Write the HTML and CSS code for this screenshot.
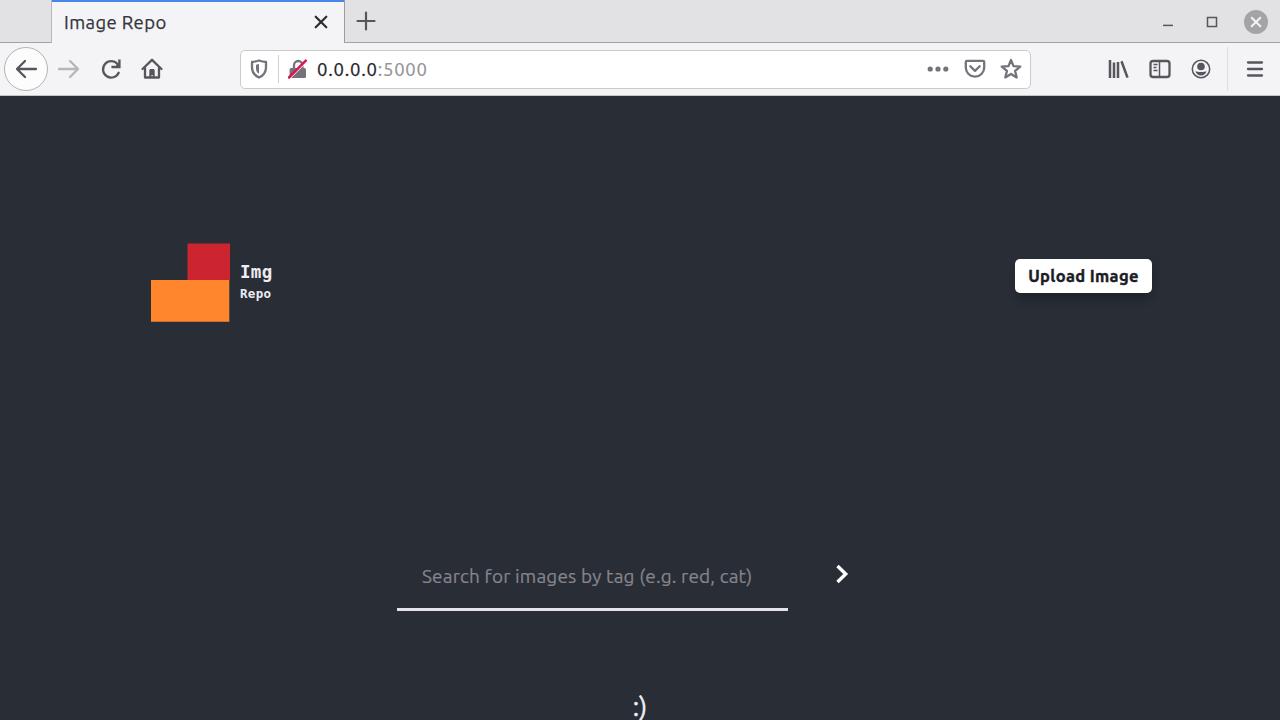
FILE: index.html
```html
<!DOCTYPE html>
<html lang="en">
<head>
<meta charset="utf-8">
<title>Image Repo</title>
<link rel="stylesheet" href="styles.css">
</head>
<body>
<div class="browser">
  <div class="tabs">
    <div class="tab-lead"></div>
    <div class="tab">
      <span class="tab-title">Image Repo</span>
      <svg class="tab-close" width="14" height="14" viewBox="0 0 14 14"><path d="M1.7 1.7l10.6 10.6M12.3 1.7L1.7 12.3"/></svg>
    </div>
    <div class="tab-rest">
      <svg class="new-tab" width="20" height="20" viewBox="0 0 20 20"><path d="M10 1.500v17M1.500 10h17"/></svg>
      <div class="window-controls">
        <svg width="12" height="24" viewBox="0 0 12 24"><path class="thin" d="M1 15.4h10"/></svg>
        <svg width="12" height="24" viewBox="0 0 12 24"><rect class="thin" x="1.5" y="7.5" width="9" height="9"/></svg>
        <svg width="24" height="24" viewBox="0 0 24 24"><circle class="close-disc" cx="12" cy="12" r="12"/><path class="close-x" d="M7.7 7.7l8.6 8.6M16.3 7.7l-8.6 8.6"/></svg>
      </div>
    </div>
  </div>
  <div class="toolbar">
    <div class="nav">
      <button class="back"><svg width="24" height="24" viewBox="0 0 24 24"><path d="M22 12H3M11 4l-8 8 8 8"/></svg></button>
      <svg class="forward" width="24" height="24" viewBox="0 0 24 24"><path d="M2 12h19M13 4l8 8-8 8"/></svg>
      <svg width="24" height="24" viewBox="0 0 24 24"><path d="M19.700 15.800A8.200 8.200 0 1 1 18.400 7"/><path class="solid" d="M21.600 2.500v8.700h-9.200v-2.400h4.400l2.400-2.800V2.500z"/></svg>
      <svg width="24" height="24" viewBox="0 0 24 24"><path d="M2.500 12L12 2.800 21.500 12"/><path d="M5 11v9.500h14V11"/><path class="solid" d="M9.300 21v-7.500c0-1 .6-1.600 1.500-1.600h2.400c.9 0 1.500.6 1.500 1.600V21h-2v-3h-1.200v3z"/></svg>
    </div>
    <div class="urlbar">
      <svg class="shield" width="18" height="20" viewBox="0 0 18 20"><path d="M9 1.500c2.600.9 4.700 1.300 7 1.500v5.500c0 5-2.500 8-7 10-4.500-2-7-5-7-10V3c2.300-.2 4.400-.6 7-1.500z"/><path class="solid" d="M9 5L6 5.700v3.800c0 2.600 1 4.200 3 5.300z"/></svg>
      <span class="url-sep"></span>
      <svg class="lock" width="20" height="20" viewBox="0 0 20 20"><path d="M6 10V6.200a4.200 4.200 0 0 1 8.400 0V10"/><rect class="solid" x="1.600" y="9" width="16.400" height="10" rx="1.500"/><path class="slash-gap" d="M1.600 19.500L19 2.200"/><path class="slash" d="M1 18.500L17.800 1.700"/></svg>
      <span class="url"><span class="host">0.0.0.0</span><span class="port">:5000</span></span>
      <div class="url-actions">
        <svg width="22" height="22" viewBox="0 0 22 22"><g class="solid"><circle cx="3.200" cy="11" r="2.600"/><circle cx="11" cy="11" r="2.600"/><circle cx="18.800" cy="11" r="2.600"/></g></svg>
        <svg width="22" height="22" viewBox="0 0 22 22"><path d="M3 2.800h16c.8 0 1.200.4 1.200 1.200V9.500a9.200 9.200 0 0 1-18.400 0V4c0-.8.400-1.200 1.200-1.200z"/><path d="M6.300 8.300l4.700 4.600 4.700-4.600"/></svg>
        <svg width="22" height="22" viewBox="0 0 22 22"><path d="M11 2l2.500 6.100 6.700.5-5.100 4.300 1.600 6.500-5.700-3.500-5.700 3.500 1.600-6.500-5.100-4.300 6.700-.5z"/></svg>
      </div>
    </div>
    <div class="tools">
      <svg width="22" height="20" viewBox="0 0 22 20"><path class="books" d="M3 1v18M7 3.500V19M11 3v16M14.500 2.200L20.500 18.600"/></svg>
      <svg width="22" height="20" viewBox="0 0 22 20"><rect x="1.500" y="2" width="19" height="16" rx="2.600"/><path class="thin" d="M10.500 2v16M4.500 5.500h4M4.500 8.500h3M4.500 11.500h4"/></svg>
      <svg width="20" height="20" viewBox="0 0 20 20"><circle class="thin" cx="10" cy="10" r="8.700"/><circle class="solid" cx="10" cy="7.500" r="3.800"/><path class="solid" d="M4.500 12.300c1.300.2 3 .8 5.500.8s4.200-.6 5.500-.8c-.7 2.500-2.600 4.200-5.500 4.200s-4.800-1.700-5.500-4.200z"/></svg>
    </div>
    <div class="menu"><svg width="18" height="20" viewBox="0 0 18 20"><path d="M2 3.500h14M2 10h14M2 16.500h14"/></svg></div>
  </div>
</div>
<main class="page">
  <header class="header">
    <div class="brand">
      <svg width="79" height="79" viewBox="0 0 79 79"><path fill="#cc252f" d="M36.500 .5H79V37H36.500z"/><path fill="#ff862c" d="M0 37h78.300v41.700H0z"/></svg>
      <div class="brand-text"><span class="brand-name">Img</span><span class="brand-sub">Repo</span></div>
    </div>
    <button class="upload">Upload Image</button>
  </header>
  <form class="search">
    <input class="search-input" placeholder="Search for images by tag (e.g. red, cat)">
    <svg class="search-go" width="14" height="20" viewBox="0 0 14 20"><path d="M2.500 2l8.200 8-8.200 8"/></svg>
  </form>
  <p class="smile">:)</p>
</main>
</body>
</html>
```

FILE: styles.css
```css
* { box-sizing: border-box; }
body {
  margin: 0;
  height: 720px;
  overflow: hidden;
  background: #292d36;
  font-family: Ubuntu, "Noto Sans", sans-serif;
}
svg {
  display: block;
  flex: none;
  fill: none;
  stroke: #56565e;
  stroke-width: 2.3;
  stroke-linecap: round;
  stroke-linejoin: round;
}
button { padding: 0; font-family: inherit; }
.solid { fill: #56565e; stroke: none; }
.thin { stroke-width: 1.5; stroke-linecap: butt; stroke-linejoin: miter; }

.browser { height: 96px; background: #f4f4f6; }
.tabs { display: flex; height: 43px; }
.tab-lead { width: 52px; background: #e2e2e4; border-right: 1px solid #b8b8ba; border-bottom: 1px solid #a3a3a6; }
.tab {
  display: flex;
  align-items: center;
  justify-content: space-between;
  width: 292px;
  padding: 0 16px 2px 12px;
  border-top: 2px solid #4586ec;
}
.tab-title {
  color: #35353d;
  font-size: 18.500px;
  line-height: 24px;
  letter-spacing: 0.4px;
  -webkit-text-stroke: 0.25px #35353d;
}
.tab-close { stroke: #2c2c34; stroke-width: 2.2; }
.tab-rest {
  display: flex;
  flex: 1;
  align-items: center;
  justify-content: space-between;
  padding: 0 12px 0 11px;
  background: #e2e2e4;
  border-left: 1px solid #9c9c9f;
  border-bottom: 1px solid #a3a3a6;
}
.new-tab { stroke-width: 2.2; }
.window-controls { display: flex; align-items: center; gap: 32px; padding-top: 2px; }
.window-controls svg:last-child { margin-left: -6px; }
.close-disc { fill: #a4a4a6; stroke: none; }
.close-x { stroke: #f4f4f5; stroke-width: 2; }

.toolbar {
  display: flex;
  align-items: center;
  height: 53px;
  padding-left: 4px;
  border-bottom: 1px solid #c5c5c8;
}
.nav { display: flex; align-items: center; width: 236px; }
.nav > svg + svg { margin-left: 18px; }
.nav > svg:last-child { margin-left: 17px; }
.back {
  display: flex;
  align-items: center;
  justify-content: center;
  width: 44px;
  height: 44px;
  margin-right: 9px;
  border: 1px solid #b4b4b6;
  border-radius: 50%;
  background: #fcfcfd;
}
.forward { stroke: #b6b6b9; }
.urlbar {
  display: flex;
  align-items: center;
  width: 791px;
  height: 39px;
  padding: 0 8px 0 9px;
  border: 1px solid #cbcbce;
  border-radius: 5px;
  background: #fff;
}
.urlbar svg { stroke: #73737b; }
.urlbar .solid { fill: #73737b; stroke: none; }
.url-sep { width: 1px; height: 28px; margin: 0 9px 0 10px; background: #cfcfd1; }
.lock .slash { stroke: #dd1651; stroke-width: 2.5; }
.lock .slash-gap { stroke: #fff; stroke-width: 1.4; }
.url { margin-left: 9px; font-size: 18.500px; line-height: 24px; letter-spacing: 0.75px; }
.host { color: #24242b; -webkit-text-stroke: 0.25px #24242b; }
.port { color: #929298; -webkit-text-stroke: 0.2px #929298; }
.url-actions { display: flex; gap: 14.500px; margin-left: auto; }
.tools { display: flex; align-items: center; gap: 20px; margin-left: 76px; }
.books { stroke-width: 2.5; stroke-linecap: butt; }
.menu {
  display: flex;
  align-items: center;
  height: 44px;
  margin-left: 16px;
  padding-left: 18px;
  border-left: 1px solid #dedee1;
}

.page { display: flex; flex-direction: column; height: 624px; overflow: hidden; }
.header {
  display: flex;
  align-items: flex-start;
  justify-content: space-between;
  height: 226px;
  padding: 147px 128px 0 151px;
}
.brand { display: flex; gap: 10px; }
.brand svg { stroke: none; }
.brand-text {
  display: flex;
  flex-direction: column;
  padding-top: 18px;
  color: #ececf1;
  font-family: "DejaVu Sans Mono", monospace;
  font-weight: bold;
}
.brand-name { font-size: 17.500px; line-height: 22px; letter-spacing: 0.3px; }
.brand-sub { font-size: 12.500px; line-height: 22px; letter-spacing: 0.3px; }
.upload {
  width: 137px;
  height: 34px;
  margin-top: 16px;
  border: 0;
  border-radius: 5px;
  background: #fff;
  box-shadow: 0 6px 10px rgba(0, 0, 0, 0.22);
  color: #1c1c24;
  font-size: 16.500px;
  font-weight: bold;
  letter-spacing: 0.35px;
  -webkit-text-stroke: 0.4px #1c1c24;
}
.search { display: flex; margin: 223px 0 0 397px; }
.search-input {
  width: 391px;
  height: 66px;
  padding: 0 25px 2px;
  border: 0;
  border-bottom: 3px solid #e4e3ec;
  outline: 0;
  background: transparent;
  color: #fff;
  font-family: inherit;
  font-size: 19px;
  letter-spacing: 0.16px;
}
.search-input::placeholder { color: #85858d; opacity: 1; -webkit-text-stroke: 0.2px #85858d; }
.search-go { margin: 19px 0 0 47px; stroke: #fff; stroke-width: 3.4; stroke-linecap: butt; stroke-linejoin: miter; }
.smile { margin: 79px 0 0; color: #f2f2f5; font-size: 26px; line-height: 34px; text-align: center; -webkit-text-stroke: 0.4px #f2f2f5; }
```
